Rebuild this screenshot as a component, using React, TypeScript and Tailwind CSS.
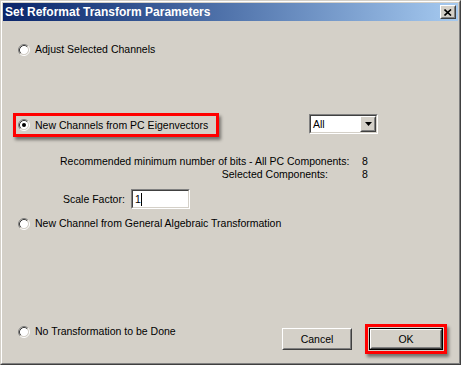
import React from "react";

// classic Win2000 radio button
const Radio = ({ checked = false }: { checked?: boolean }) => (
  <svg width="12" height="12" viewBox="0 0 12 12" className="shrink-0">
    <circle cx="6" cy="6" r="4.2" fill="#ffffff" />
    <path d="M2.11 9.89 A5.5 5.5 0 0 1 9.89 2.11" stroke="#808080" strokeWidth="1" fill="none" />
    <path d="M9.89 2.11 A5.5 5.5 0 0 1 2.11 9.89" stroke="#ffffff" strokeWidth="1" fill="none" />
    <path d="M2.82 9.18 A4.5 4.5 0 0 1 9.18 2.82" stroke="#404040" strokeWidth="1" fill="none" />
    <path d="M9.18 2.82 A4.5 4.5 0 0 1 2.82 9.18" stroke="#d4d0c8" strokeWidth="1" fill="none" />
    {checked && <circle cx="6" cy="6" r="2" fill="#000000" />}
  </svg>
);

const Sunken = ({ className, children }: { className: string; children?: React.ReactNode }) => (
  <div className={`border border-t-[#808080] border-l-[#808080] border-r-white border-b-white ${className}`}>
    <div className="w-full h-full border border-t-[#404040] border-l-[#404040] border-r-[#d4d0c8] border-b-[#d4d0c8] bg-white flex items-center">
      {children}
    </div>
  </div>
);

const Raised = ({ className, children }: { className: string; children?: React.ReactNode }) => (
  <div className={`border border-t-white border-l-white border-r-[#404040] border-b-[#404040] bg-[#d4d0c8] ${className}`}>
    <div className="w-full h-full border border-t-[#d4d0c8] border-l-[#d4d0c8] border-r-[#808080] border-b-[#808080] flex items-center justify-center">
      {children}
    </div>
  </div>
);

const options = {
  adjust: "Adjust Selected Channels",
  pc: "New Channels from PC Eigenvectors",
  algebraic: "New Channel from General Algebraic Transformation",
  none: "No Transformation to be Done",
};

export default function App() {
  return (
    <div
      className="w-[461px] h-[365px] bg-[#d4d0c8] border border-t-[#d4d0c8] border-l-[#d4d0c8] border-r-[#404040] border-b-[#404040] text-[10.5px] text-black leading-[13px] whitespace-nowrap"
      style={{ fontFamily: '"Liberation Sans", Arial, sans-serif' }}
    >
      <div className="w-full h-full border border-t-white border-l-white border-r-[#808080] border-b-[#808080] p-px flex flex-col">
        {/* Title bar */}
        <div className="h-[18px] flex items-center bg-gradient-to-r from-[#0a246a] to-[#a6caf0] pl-[2px] pr-[2px]">
          <span className="flex-1 text-white font-bold text-[12px]">Set Reformat Transform Parameters</span>
          <Raised className="w-[16px] h-[14px]">
            <svg width="8" height="7" viewBox="0 0 8 7">
              <path d="M0.5 0.5 L7 6.5 M7 0.5 L0.5 6.5" stroke="#000" strokeWidth="1.6" />
            </svg>
          </Raised>
        </div>

        {/* Adjust selected channels */}
        <div className="mt-[22px] h-[13px] pl-[15px] flex items-center gap-[5px]">
          <Radio />
          <span>{options.adjust}</span>
        </div>

        {/* PC eigenvectors + dropdown */}
        <div className="mt-[57px] flex items-start pl-[10px]">
          <div className="w-[206px] h-[24px] border-[3px] border-[#ff0000] pl-[2px] flex items-center gap-[5px] shadow-[2px_3px_3px_rgba(0,0,0,0.45)]">
            <Radio checked />
            <span>{options.pc}</span>
          </div>
          <Sunken className="ml-[90px] mt-px w-[69px] h-[20px]">
            <span className="flex-1 pl-[2px]">All</span>
            <Raised className="w-[16px] h-[16px]">
              <svg width="7" height="4" viewBox="0 0 7 4">
                <path d="M0 0 H7 L3.5 4 Z" fill="#000" />
              </svg>
            </Raised>
          </Sunken>
        </div>

        {/* bit counts */}
        <div className="mt-[18px] h-[13px] pl-[57px] flex">
          <span className="w-[302px]">Recommended minimum number of bits - All PC Components:</span>
          <span>8</span>
        </div>
        <div className="h-[13px] pl-[57px] flex">
          <span className="w-[302px] text-right pr-[34px]">Selected Components:</span>
          <span>8</span>
        </div>

        {/* scale factor */}
        <div className="mt-[8px] h-[20px] pl-[60px] flex items-center">
          <span className="w-[68px]">Scale Factor:</span>
          <Sunken className="w-[59px] h-[20px]">
            <span className="pl-[2px]">1</span>
            <span className="w-px h-[13px] bg-black" />
          </Sunken>
        </div>

        {/* algebraic */}
        <div className="mt-[8px] h-[13px] pl-[15px] flex items-center gap-[5px]">
          <Radio />
          <span>{options.algebraic}</span>
        </div>

        {/* bottom row */}
        <div className="mt-[94px] flex items-start pr-[11px]">
          <div className="flex-1 mt-px h-[13px] pl-[15px] flex items-center gap-[5px]">
            <Radio />
            <span>{options.none}</span>
          </div>
          <Raised className="mt-[4px] w-[70px] h-[22px]">Cancel</Raised>
          <div className="ml-[13px] w-[82px] h-[30px] border-[3px] border-[#ff0000] p-px shadow-[2px_3px_3px_rgba(0,0,0,0.45)]">
            <div className="w-full h-full border border-black">
              <Raised className="w-full h-full">OK</Raised>
            </div>
          </div>
        </div>
      </div>
    </div>
  );
}
